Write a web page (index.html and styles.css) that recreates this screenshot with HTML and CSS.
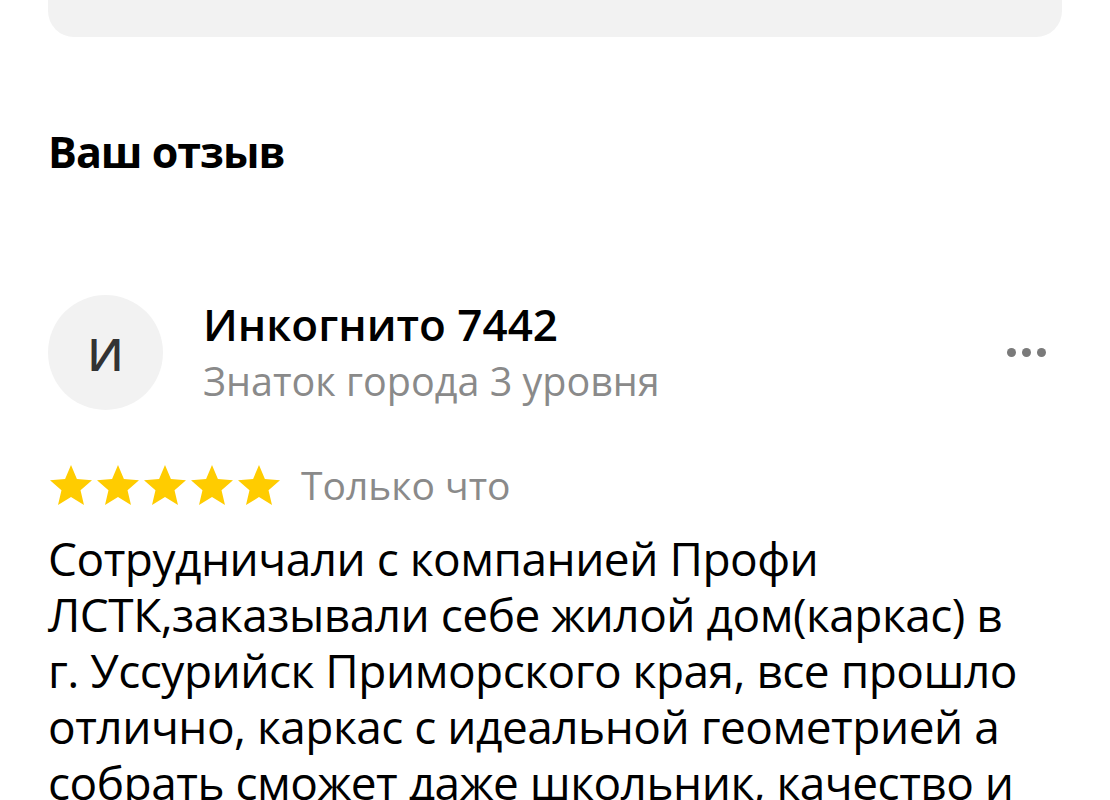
FILE: index.html
```html
<!DOCTYPE html>
<html lang="ru">
<head>
  <meta charset="UTF-8" />
  <meta name="viewport" content="width=device-width, initial-scale=1.0"/>
  <title>Ваш отзыв</title>
  <link rel="stylesheet" href="styles.css">
</head>
<body>

  <div class="top-card"></div>

  <h2 class="section-title">Ваш отзыв</h2>

  <div class="review">
    <div class="review-head">
      <div class="avatar">И</div>
      <div class="author">
        <div class="author-name">Инкогнито 7442</div>
        <div class="author-level">Знаток города 3 уровня</div>
      </div>
      <button class="more" type="button" aria-label="Ещё">
        <span></span><span></span><span></span>
      </button>
    </div>

    <div class="rating">
      <div class="stars">
        <svg viewBox="2 2 20 19"><path d="M12 17.27L18.18 21l-1.64-7.03L22 9.24l-7.19-.61L12 2 9.19 8.63 2 9.24l5.46 4.73L5.82 21z"/></svg>
        <svg viewBox="2 2 20 19"><path d="M12 17.27L18.18 21l-1.64-7.03L22 9.24l-7.19-.61L12 2 9.19 8.63 2 9.24l5.46 4.73L5.82 21z"/></svg>
        <svg viewBox="2 2 20 19"><path d="M12 17.27L18.18 21l-1.64-7.03L22 9.24l-7.19-.61L12 2 9.19 8.63 2 9.24l5.46 4.73L5.82 21z"/></svg>
        <svg viewBox="2 2 20 19"><path d="M12 17.27L18.18 21l-1.64-7.03L22 9.24l-7.19-.61L12 2 9.19 8.63 2 9.24l5.46 4.73L5.82 21z"/></svg>
        <svg viewBox="2 2 20 19"><path d="M12 17.27L18.18 21l-1.64-7.03L22 9.24l-7.19-.61L12 2 9.19 8.63 2 9.24l5.46 4.73L5.82 21z"/></svg>
      </div>
      <span class="review-date">Только что</span>
    </div>

    <p class="review-text">Сотрудничали с компанией Профи ЛСТК,заказывали себе жилой дом(каркас) в г. Уссурийск Приморского края, все прошло отлично, каркас с идеальной геометрией а собрать сможет даже школьник, качество и сроки на высоте, рекомендую!</p>
  </div>

</body>
</html>
```

FILE: styles.css
```css
body {
  font-family: "Open Sans", "Noto Sans", sans-serif;
  background-color: #fff;
  color: #000;
  margin: 0;
  padding: 0 48px;
  overflow: hidden;
}

.top-card {
  height: 100px;
  margin-top: -63px;
  background-color: #f2f2f2;
  border-radius: 26px;
}

.section-title {
  font-size: 43px;
  font-weight: 700;
  letter-spacing: -1px;
  line-height: 56px;
  margin: 87px 0 0;
}

.review {
  margin-top: 115px;
}

.review-head {
  display: flex;
  align-items: center;
}

.avatar {
  width: 115px;
  height: 115px;
  border-radius: 50%;
  background-color: #f2f2f2;
  color: #333;
  font-size: 46px;
  font-weight: 600;
  display: flex;
  align-items: center;
  justify-content: center;
  flex-shrink: 0;
}

.author {
  margin-left: 40px;
  flex: 1;
}

.author-name {
  font-size: 44px;
  font-weight: 600;
  line-height: 56px;
}

.author-level {
  font-size: 39.5px;
  line-height: 58px;
  color: #8a8a8a;
}

.more {
  display: flex;
  gap: 6px;
  padding: 10px;
  margin-right: 6px;
  border: none;
  background: none;
}

.more span {
  width: 9px;
  height: 9px;
  border-radius: 50%;
  background-color: #7a7a7a;
}

.rating {
  display: flex;
  align-items: center;
  margin-top: 52px;
}

.stars {
  display: flex;
  gap: 5px;
  margin-left: 2px;
}

.stars svg {
  width: 42px;
  height: 40px;
  fill: #fc0;
}

.review-date {
  margin-left: 21px;
  font-size: 39px;
  line-height: 46px;
  color: #8a8a8a;
}

.review-text {
  max-width: 985px;
  font-size: 46px;
  letter-spacing: -0.5px;
  line-height: 56px;
  margin: 22px 0 0;
}
```
